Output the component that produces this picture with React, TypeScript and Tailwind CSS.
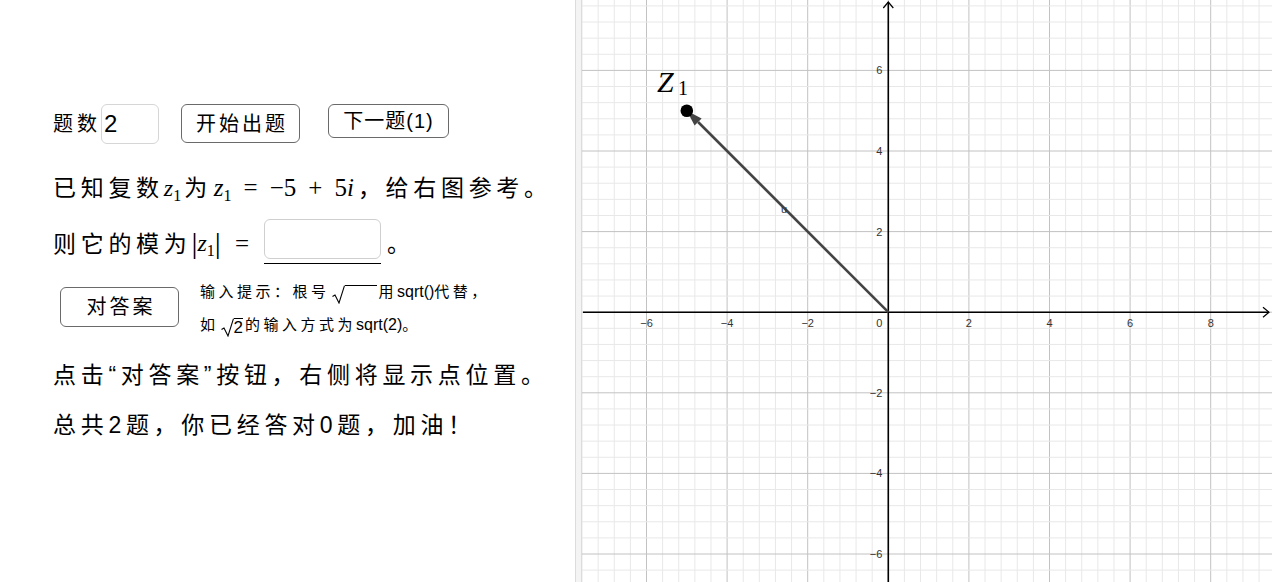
import React from 'react'

// graph view geometry (local to the right panel)
const W = 690
const H = 582
const OX = 306.3
const OY = 312.2
const U = 40.3

function fmt(v: number) {
  return v < 0 ? '\u2212' + Math.abs(v) : String(v)
}

function Graph() {
  const step = U * 0.4
  const xk: number[] = []
  const yk: number[] = []
  for (let k = Math.ceil(-OX / step); k <= Math.floor((W - OX) / step); k++) xk.push(k)
  for (let k = Math.ceil(-(H - OY) / step); k <= Math.floor(OY / step); k++) yk.push(k)

  // point z1 = -5 + 5i
  const px = OX - 5 * U
  const py = OY - 5 * U
  const d = Math.SQRT1_2
  const bx = px + 16 * d
  const by = py + 16 * d

  return (
    <svg width={W} height={H} className="block">
      {xk.map((k) => (
        <line
          key={'x' + k}
          x1={OX + k * step}
          x2={OX + k * step}
          y1={0}
          y2={H}
          stroke={k % 5 === 0 ? '#c2c2c2' : '#e8e8e8'}
          strokeWidth={1}
        />
      ))}
      {yk.map((k) => (
        <line
          key={'y' + k}
          y1={OY - k * step}
          y2={OY - k * step}
          x1={0}
          x2={W}
          stroke={k % 5 === 0 ? '#c2c2c2' : '#e8e8e8'}
          strokeWidth={1}
        />
      ))}

      {/* axes */}
      <line x1={1} x2={W - 3} y1={OY} y2={OY} stroke="#000" strokeWidth={1.6} />
      <line x1={OX} x2={OX} y1={2} y2={H} stroke="#000" strokeWidth={1.6} />
      <polyline points={`${W - 9},${OY - 5} ${W - 3},${OY} ${W - 9},${OY + 5}`} fill="none" stroke="#000" strokeWidth={1.2} />
      <polyline points={`${OX - 5},${8} ${OX},${2} ${OX + 5},${8}`} fill="none" stroke="#000" strokeWidth={1.2} />

      {/* tick labels */}
      <g fill="#333" fontSize={11} fontFamily="'Liberation Sans', Arial, sans-serif">
        {[-6, -4, -2, 2, 4, 6, 8].map((v) => (
          <text key={'lx' + v} x={OX + v * U} y={OY + 15} textAnchor="middle">
            {fmt(v)}
          </text>
        ))}
        <text x={OX - 9} y={OY + 15} textAnchor="middle">0</text>
        {[-6, -4, -2, 2, 4, 6].map((v) => (
          <text key={'ly' + v} x={OX - 6} y={OY - v * U + 4} textAnchor="end">
            {fmt(v)}
          </text>
        ))}
      </g>

      {/* vector u */}
      <line x1={OX} y1={OY} x2={bx} y2={by} stroke="#444" strokeWidth={2.6} />
      <polygon
        points={`${px},${py} ${bx + 5 * d},${by - 5 * d} ${bx - 5 * d},${by + 5 * d}`}
        fill="#444"
      />
      <text x={199} y={213} fontSize={11} fill="#333" fontFamily="'Liberation Sans', Arial, sans-serif">
        u
      </text>

      {/* point Z1 */}
      <circle cx={px} cy={py} r={6.3} fill="#000" />
      <text x={75} y={92} fontSize={30} fontStyle="italic" fontFamily="'Liberation Serif', serif" fill="#000">
        Z
      </text>
      <text x={96} y={95} fontSize={20} fontFamily="'Liberation Serif', serif" fill="#000">
        1
      </text>
    </svg>
  )
}

function Z1({ size = 'text-[24px]' }: { size?: string }) {
  return (
    <span className={`font-['Liberation_Serif',serif] ${size} tracking-normal`}>
      <i>z</i>
      <span className="relative top-[5px] text-[16px]">1</span>
    </span>
  )
}

// radical sign drawn as a stroke, overline carried by the content's top border
function Root({ children }: { children?: React.ReactNode }) {
  return (
    <span className="mx-[2px] mt-[4px] inline-flex items-start">
      <svg width="13" height="19" className="block shrink-0">
        <path d="M0.5 11.5 L3 10 L7 18 L12.5 0.6" fill="none" stroke="#000" strokeWidth={1.1} />
      </svg>
      <span className="border-t-[1.1px] border-black leading-[18px] tracking-normal">{children}</span>
    </span>
  )
}

export default function App() {
  return (
    <div className="flex h-[582px] w-[1272px] overflow-hidden bg-white text-black">
      {/* left: question panel */}
      <div className="w-[575px] shrink-0 pl-[53px] pt-[104px] font-['Liberation_Sans','Noto_Sans_CJK_SC',sans-serif]">
        <div className="flex items-start">
          <span className="mt-[6px] text-[20px] leading-[28px] tracking-[4px]">题数</span>
          <div className="h-[40px] w-[58px] rounded-[6px] border border-[#d6d6d6] pl-[2px] text-[24px] leading-[38px]">
            2
          </div>
          <button
            type="button"
            className="ml-[22px] h-[39px] w-[119px] rounded-[6px] border-[1.5px] border-[#6a6a6a] bg-white pl-[3px] text-[20px] tracking-[3px]"
          >
            开始出题
          </button>
          <button
            type="button"
            className="ml-[28px] h-[34px] w-[121px] rounded-[6px] border-[1.5px] border-[#6a6a6a] bg-white text-[20px] leading-[30px] tracking-[1px]"
          >
            下一题(1)
          </button>
        </div>

        <div className="mt-[28px] flex h-[32px] items-center whitespace-nowrap text-[23px] tracking-[4.7px]">
          <span>已知复数</span>
          <Z1 />
          <span className="ml-[3px]">为</span>
          <span className="ml-[2px] flex items-center font-['Liberation_Serif',serif] text-[25px] tracking-normal">
            <Z1 size="text-[25px]" />
            <span className="mx-[12px]">=</span>
            <span>−5</span>
            <span className="mx-[12px]">+</span>
            <span>
              5<i>i</i>
            </span>
          </span>
          <span className="ml-[4px]">，给右图参考。</span>
        </div>

        <div className="mt-[15px] flex items-end whitespace-nowrap text-[23px] tracking-[4.7px]">
          <span className="mb-[3px]">则它的模为</span>
          <span className="mb-[2px] flex items-center font-['Liberation_Serif',serif] tracking-normal">
            <span className="text-[30px] leading-[34px]">|</span>
            <Z1 />
            <span className="text-[30px] leading-[34px]">|</span>
            <span className="ml-[14px] text-[25px]">=</span>
          </span>
          <div className="ml-[15px] w-[117px] border-b-[1.5px] border-black pb-[4px]">
            <div className="h-[40px] w-[117px] rounded-[6px] border border-[#cfcfcf]" />
          </div>
          <span className="mb-[3px] ml-[6px]">。</span>
        </div>

        <div className="mt-[17px] flex items-start">
          <button
            type="button"
            className="ml-[7px] mt-[6px] h-[40px] w-[119px] rounded-[6px] border-[1.5px] border-[#6a6a6a] bg-white pl-[3px] text-[20px] tracking-[3px]"
          >
            对答案
          </button>
          <div className="ml-[21px] flex flex-col text-[15px] leading-[22px] tracking-[3.5px]">
            <div className="flex h-[22px] items-start whitespace-nowrap">
              <span>输入提示：根号</span>
              <Root>
                <span className="inline-block w-[32px]" />
              </Root>
              <span>用</span>
              <span className="text-[16px] tracking-normal">sqrt()</span>
              <span>代替，</span>
            </div>
            <div className="mt-[11px] flex h-[22px] items-start whitespace-nowrap">
              <span>如</span>
              <Root>
                <span className="text-[17px]">2</span>
              </Root>
              <span>的输入方式为</span>
              <span className="text-[16px] tracking-normal">sqrt(2)</span>
              <span>。</span>
            </div>
          </div>
        </div>

        <div className="mt-[23px] h-[32px] whitespace-nowrap text-[23px] leading-[32px] tracking-[4.7px]">
          点击“对答案”按钮，右侧将显示点位置。
        </div>
        <div className="mt-[18px] h-[32px] whitespace-nowrap text-[23px] leading-[32px] tracking-[4.7px]">
          总共2题，你已经答对0题，加油！
        </div>
      </div>

      {/* splitter */}
      <div className="w-[7px] shrink-0 border-x border-[#dcdcdc] bg-[#f4f4f4]" />

      {/* right: graphics view */}
      <div className="flex-1">
        <Graph />
      </div>
    </div>
  )
}
